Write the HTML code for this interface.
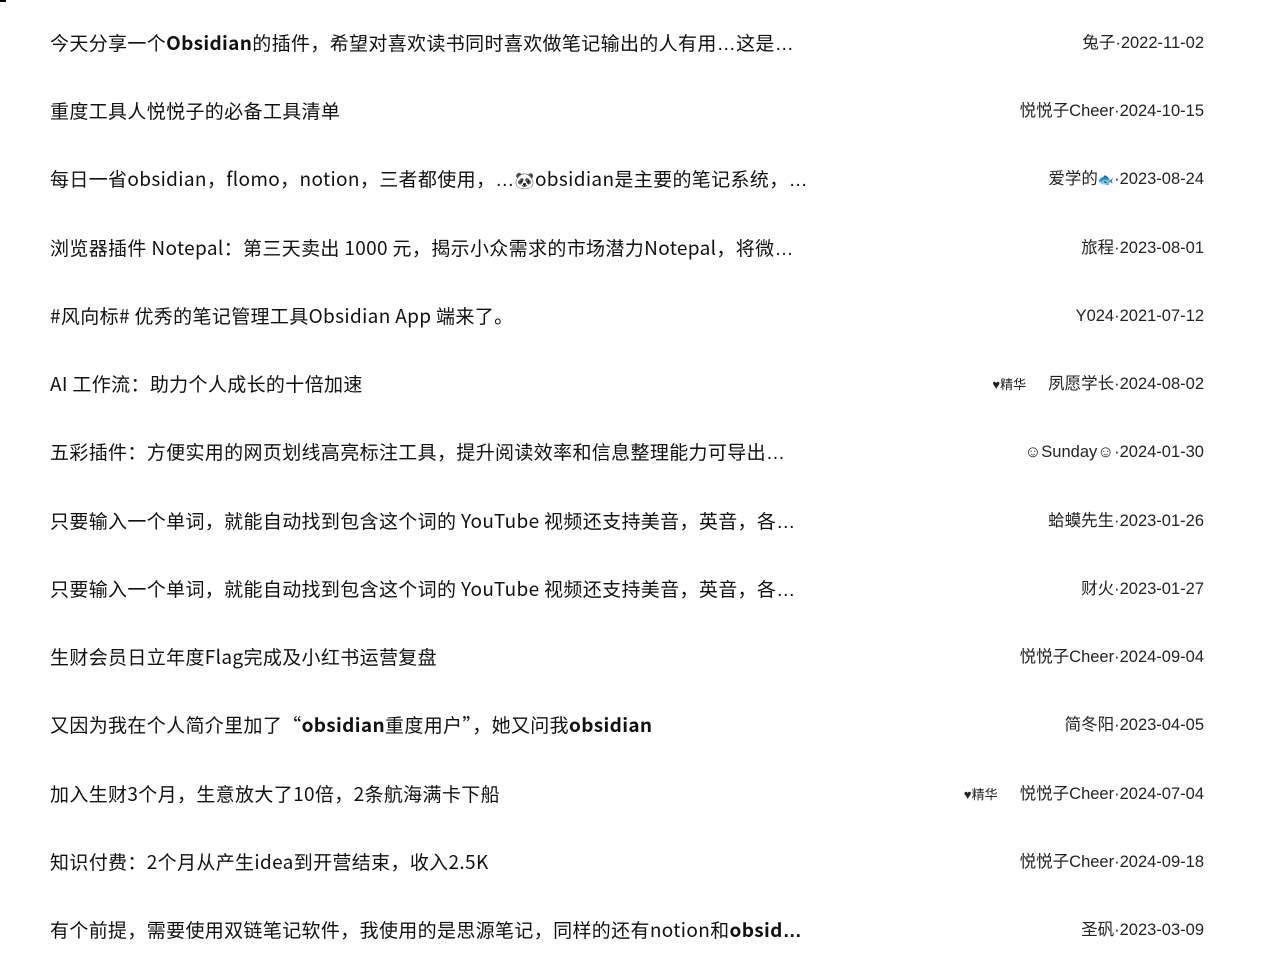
<!DOCTYPE html>
<html><head><meta charset="utf-8"><style>
body{margin:0;width:1280px;height:953px;background:#fff;position:relative;overflow:hidden;font-family:"Noto Sans CJK SC","Liberation Sans",sans-serif;color:#111}
.r{position:absolute;left:0;width:1280px;height:30px;line-height:30px}
.t{position:absolute;left:50px;font-size:19px;letter-spacing:0.35px;white-space:nowrap}
.m{position:absolute;right:76px;font-size:16.5px;white-space:nowrap;color:#222;font-family:"Liberation Sans","Noto Sans CJK SC",sans-serif}
.b{font-size:13px;margin-right:22px}
.e{font-family:"Liberation Sans",sans-serif}
</style></head><body>
<div style="position:absolute;left:0;top:0;width:6px;height:2px;background:#000"></div>
<div class="r" style="top:28px"><span class="t">今天分享一个<b style="font-weight:600">Obsidian</b>的插件，希望对喜欢读书同时喜欢做笔记输出的人有用<span class="e">…</span>这是<span class="e">…</span></span><span class="m">兔子·2022-11-02</span></div>
<div class="r" style="top:96px"><span class="t">重度工具人悦悦子的必备工具清单</span><span class="m">悦悦子Cheer·2024-10-15</span></div>
<div class="r" style="top:164px"><span class="t">每日一省obsidian，flomo，notion，三者都使用，<span class="e">…</span><span style="font-size:16px">🐼</span>obsidian是主要的笔记系统，<span class="e">…</span></span><span class="m">爱学的<span style="font-size:13px">🐟</span>·2023-08-24</span></div>
<div class="r" style="top:233px"><span class="t">浏览器插件 Notepal：第三天卖出 1000 元，揭示小众需求的市场潜力Notepal，将微<span class="e">…</span></span><span class="m">旅程·2023-08-01</span></div>
<div class="r" style="top:301px"><span class="t">#风向标# 优秀的笔记管理工具Obsidian App 端来了。</span><span class="m">Y024·2021-07-12</span></div>
<div class="r" style="top:369px"><span class="t">AI 工作流：助力个人成长的十倍加速</span><span class="m"><span class="b">♥精华</span>夙愿学长·2024-08-02</span></div>
<div class="r" style="top:437px"><span class="t">五彩插件：方便实用的网页划线高亮标注工具，提升阅读效率和信息整理能力可导出<span class="e">…</span></span><span class="m">☺Sunday☺·2024-01-30</span></div>
<div class="r" style="top:506px"><span class="t">只要输入一个单词，就能自动找到包含这个词的 YouTube 视频还支持美音，英音，各<span class="e">…</span></span><span class="m">蛤蟆先生·2023-01-26</span></div>
<div class="r" style="top:574px"><span class="t">只要输入一个单词，就能自动找到包含这个词的 YouTube 视频还支持美音，英音，各<span class="e">…</span></span><span class="m">财火·2023-01-27</span></div>
<div class="r" style="top:642px"><span class="t">生财会员日立年度Flag完成及小红书运营复盘</span><span class="m">悦悦子Cheer·2024-09-04</span></div>
<div class="r" style="top:710px"><span class="t">又因为我在个人简介里加了“<b style="font-weight:600">obsidian</b>重度用户”，她又问我<b style="font-weight:600">obsidian</b></span><span class="m">简冬阳·2023-04-05</span></div>
<div class="r" style="top:779px"><span class="t">加入生财3个月，生意放大了10倍，2条航海满卡下船</span><span class="m"><span class="b">♥精华</span>悦悦子Cheer·2024-07-04</span></div>
<div class="r" style="top:847px"><span class="t">知识付费：2个月从产生idea到开营结束，收入2.5K</span><span class="m">悦悦子Cheer·2024-09-18</span></div>
<div class="r" style="top:915px"><span class="t">有个前提，需要使用双链笔记软件，我使用的是思源笔记，同样的还有notion和<b style="font-weight:600">obsid<span class="e">…</span></b></span><span class="m">圣矾·2023-03-09</span></div>
</body></html>
